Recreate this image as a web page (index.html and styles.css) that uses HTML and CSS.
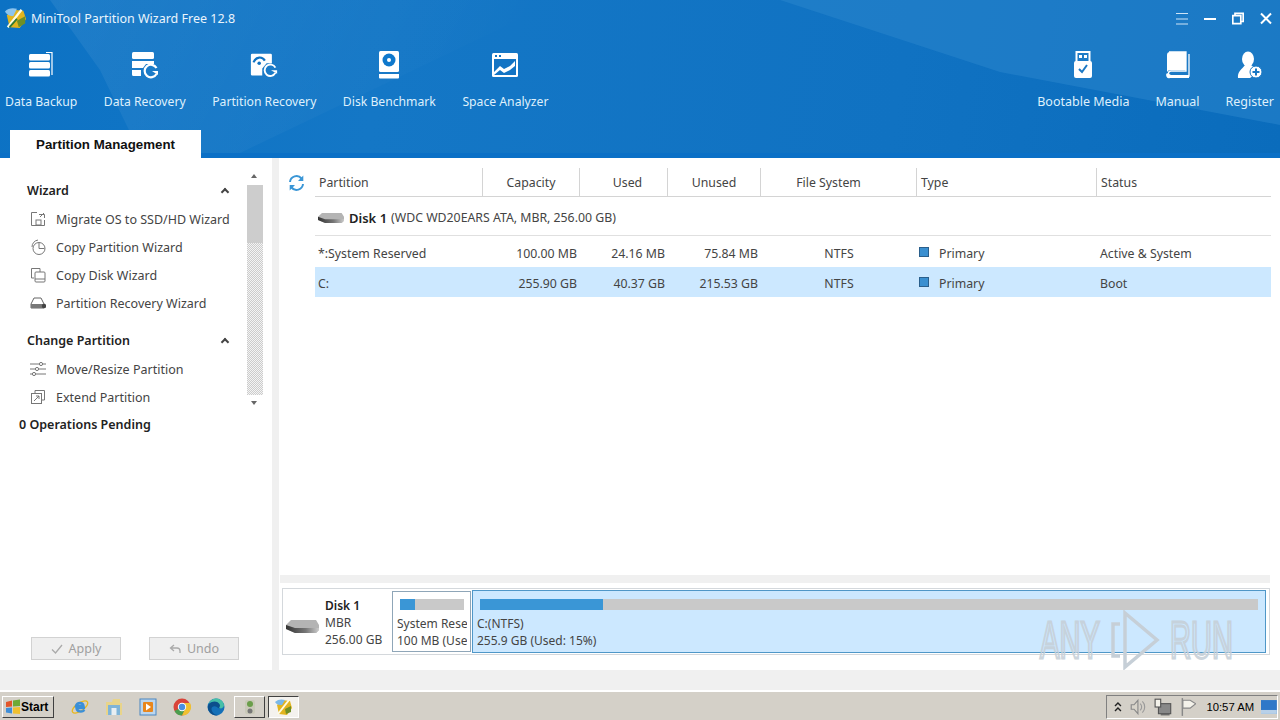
FILE: index.html
```html
<!DOCTYPE html>
<html lang="en">
<head>
  <meta charset="UTF-8">
  <title>MiniTool Partition Wizard Free 12.8</title>
  <link rel="stylesheet" href="styles.css">
</head>
<body>
<div class="app">

  <header class="top">
    <div class="titlebar">
      <svg class="logo" viewBox="0 0 24 24">
        <path d="M2 9 L9 3 L20 4 L23 13 L16 23 L5 22 Z" fill="#e2b41e"/>
        <path d="M0 5 C3 1 9 1 13 2 L9 10 C6 10 2 9 0 5Z" fill="#8cc4ee"/>
        <path d="M3 22 L18 3" stroke="#fffbe0" stroke-width="2.500"/>
        <path d="M13 15 L22 10 L22 18 L15 22 Z" fill="#6f8f26"/>
        <path d="M5 22 L13 13" stroke="#2f7a34" stroke-width="2"/>
      </svg>
      <span class="app-title">MiniTool Partition Wizard Free 12.8</span>
      <div class="win-btns">
        <svg viewBox="0 0 12 12"><path d="M0 1H12M0 6.500H12M0 11.500H12" stroke="#cfe4f6" stroke-width="1"/></svg>
        <svg viewBox="0 0 12 12"><path d="M0 6.500H12" stroke="#fff" stroke-width="2"/></svg>
        <svg viewBox="0 0 12 12"><path d="M3 3V0.800H11.200V9H9M0.800 3.200H8.800V11.200H0.800Z" fill="none" stroke="#fff" stroke-width="1.700"/></svg>
        <svg viewBox="0 0 12 12"><path d="M1 1L11 11M11 1L1 11" stroke="#fff" stroke-width="2"/></svg>
      </div>
    </div>

    <nav class="tools">
      <div class="tool-group tool-group-left">
        <div class="tool">
          <svg class="tool-icon" viewBox="0 0 28 28">
            <rect x="2" y="3" width="21" height="6.500" rx="1.500" fill="#fff"/>
            <rect x="2" y="11" width="21" height="6.500" rx="1.500" fill="#fff"/>
            <rect x="2" y="19" width="21" height="6.500" rx="1.500" fill="#fff"/>
            <path d="M19 1.500H25V24" fill="none" stroke="#fff" stroke-width="1.200"/>
          </svg>
          <span>Data Backup</span>
        </div>
        <div class="tool">
          <svg class="tool-icon" viewBox="0 0 28 28">
            <rect x="1" y="1" width="22" height="7" rx="1.500" fill="#fff"/>
            <path d="M1 10H23V13H15L12 17H1Z" fill="#fff"/>
            <path d="M1 19H10V25H2.500A1.500 1.500 0 0 1 1 23.500Z" fill="#fff"/>
            <path d="M25.500 17A6.300 6.300 0 1 0 25.500 23" fill="none" stroke="#fff" stroke-width="2.200"/>
            <path d="M21 20H27V24Z" fill="#fff"/>
          </svg>
          <span>Data Recovery</span>
        </div>
        <div class="tool">
          <svg class="tool-icon" viewBox="0 0 32 28">
            <path d="M2.500 1H23.500A1.500 1.500 0 0 1 25 2.500V12H19L14 18V26H2.500A1.500 1.500 0 0 1 1 24.500V2.500A1.500 1.500 0 0 1 2.500 1Z" fill="#fff"/>
            <path d="M4 11C7 4 14 4 17 9" fill="none" stroke="#0f72c2" stroke-width="2.500"/>
            <circle cx="10.500" cy="12" r="2" fill="#0f72c2"/>
            <path d="M29 17A6.500 6.500 0 1 0 29 23" fill="none" stroke="#fff" stroke-width="2.200"/>
            <path d="M24 20H31V24Z" fill="#fff"/>
          </svg>
          <span>Partition Recovery</span>
        </div>
        <div class="tool">
          <svg class="tool-icon" viewBox="0 0 28 28">
            <rect x="4" y="0" width="20" height="21" rx="1.500" fill="#fff"/>
            <circle cx="14" cy="9" r="6.500" fill="#0f78cc"/>
            <circle cx="14" cy="9" r="2" fill="#fff"/>
            <path d="M4 23H24V26.500A1 1 0 0 1 23 27.500H5A1 1 0 0 1 4 26.500Z" fill="#fff"/>
          </svg>
          <span>Disk Benchmark</span>
        </div>
        <div class="tool">
          <svg class="tool-icon" viewBox="0 0 28 28">
            <rect x="1" y="2" width="26" height="24" rx="1.500" fill="#fff"/>
            <rect x="3" y="8" width="22" height="16" fill="#1374c4"/>
            <rect x="4" y="4" width="2" height="2" fill="#1374c4"/>
            <rect x="8" y="4" width="2" height="2" fill="#1374c4"/>
            <path d="M3 21L9 15L13 18L19 15L24 10V15L19 19L13 22L9 19L3 24Z" fill="#fff"/>
          </svg>
          <span>Space Analyzer</span>
        </div>
      </div>
      <div class="tool-group tool-group-right">
        <div class="tool">
          <svg class="tool-icon" viewBox="0 0 28 28">
            <rect x="7.500" y="1" width="13" height="11" fill="none" stroke="#fff" stroke-width="2"/>
            <rect x="10" y="4" width="3" height="3" fill="#fff"/>
            <rect x="15" y="4" width="3" height="3" fill="#fff"/>
            <rect x="5" y="10" width="18" height="17" rx="2" fill="#fff"/>
            <path d="M10 18L13 21L18 14" fill="none" stroke="#1a78c4" stroke-width="2"/>
          </svg>
          <span>Bootable Media</span>
        </div>
        <div class="tool">
          <svg class="tool-icon" viewBox="0 0 28 28">
            <path d="M5 1H22V20H7A2.500 2.500 0 0 0 7 25H25V3" fill="none" stroke="#fff" stroke-width="1.300"/>
            <path d="M6 1H22V19H6.500A4 4 0 0 0 3 21V4A3 3 0 0 1 6 1Z" fill="#fff"/>
            <path d="M3 22A3 3 0 0 0 6 27H25V24H7" fill="#fff"/>
          </svg>
          <span>Manual</span>
        </div>
        <div class="tool">
          <svg class="tool-icon" viewBox="0 0 28 28">
            <ellipse cx="12" cy="8" rx="6" ry="7.500" fill="#fff"/>
            <path d="M9 14H15L23 20L14 27H2C1 21 6 18 9 14Z" fill="#fff"/>
            <circle cx="20" cy="21" r="6" fill="#fff" stroke="#1a78c4" stroke-width="1"/>
            <path d="M20 17.500V24.500M16.500 21H23.500" stroke="#1a78c4" stroke-width="2"/>
          </svg>
          <span>Register</span>
        </div>
      </div>
    </nav>

    <div class="tabs">
      <div class="tab">Partition Management</div>
    </div>
  </header>

  <main class="body">
    <aside class="side">
      <div class="side-scroll">
        <div class="side-list">
          <div class="group-head"><span>Wizard</span><span class="caret"></span></div>
          <div class="side-item">
            <svg viewBox="0 0 16 16"><path d="M7 1.500H1.500V14.500H14.500V9M9 3.500H14.500V7M14 2L10 6" fill="none" stroke="#777"/><rect x="6" y="9" width="5" height="5" fill="none" stroke="#777"/></svg>
            <span>Migrate OS to SSD/HD Wizard</span>
          </div>
          <div class="side-item">
            <svg viewBox="0 0 16 16"><circle cx="9" cy="9.500" r="6" fill="none" stroke="#777"/><path d="M9 4V9.500H14.500M2 8A7 7 0 0 1 8 1" fill="none" stroke="#777"/></svg>
            <span>Copy Partition Wizard</span>
          </div>
          <div class="side-item">
            <svg viewBox="0 0 16 16"><path d="M4 11H1.500V1.500H10V5" fill="none" stroke="#777"/><rect x="5" y="5" width="10" height="10" rx="1" fill="none" stroke="#777"/><path d="M5 12H15" stroke="#777"/></svg>
            <span>Copy Disk Wizard</span>
          </div>
          <div class="side-item">
            <svg viewBox="0 0 16 16"><path d="M1 9L4 3H11L14 9V13H1Z" fill="none" stroke="#666"/><rect x="1" y="9" width="13" height="4" fill="#777"/><circle cx="14" cy="11" r="2.200" fill="#444"/></svg>
            <span>Partition Recovery Wizard</span>
          </div>
          <div class="group-head group-head-next"><span>Change Partition</span><span class="caret"></span></div>
          <div class="side-item">
            <svg viewBox="0 0 16 16"><path d="M0 3H16M0 8H16M0 13H16" stroke="#777"/><circle cx="11" cy="3" r="1.600" fill="#fff" stroke="#777"/><circle cx="7" cy="8" r="1.600" fill="#fff" stroke="#777"/><circle cx="4" cy="13" r="1.600" fill="#fff" stroke="#777"/></svg>
            <span>Move/Resize Partition</span>
          </div>
          <div class="side-item">
            <svg viewBox="0 0 16 16"><path d="M5 4V1.500H14.500V11H12" fill="none" stroke="#777"/><rect x="1.500" y="4.500" width="10" height="10" fill="none" stroke="#777"/><path d="M4 12L9 7M6 7H9V10" fill="none" stroke="#777"/></svg>
            <span>Extend Partition</span>
          </div>
        </div>
        <div class="scrollbar">
          <div class="arrow arrow-up"></div>
          <div class="track"><div class="thumb"></div></div>
          <div class="arrow arrow-down"></div>
        </div>
      </div>
      <div class="pending">0 Operations Pending</div>
      <div class="side-actions">
        <button class="action"><svg viewBox="0 0 12 12"><path d="M1 6.500L4.500 10L11 2" fill="none" stroke="#aaa" stroke-width="1.300"/></svg>Apply</button>
        <button class="action"><svg viewBox="0 0 12 12"><path d="M5 2L1.500 5L5 8M1.500 5H8A3 3 0 0 1 11 8V10" fill="none" stroke="#aaa" stroke-width="1.300"/></svg>Undo</button>
      </div>
    </aside>

    <section class="content">
      <div class="table-wrap">
        <svg class="refresh" viewBox="0 0 16 16">
          <path d="M1.500 7A6.500 6.500 0 0 1 13 3.500M14.500 9A6.500 6.500 0 0 1 3 12.500" fill="none" stroke="#3a96d6" stroke-width="2"/>
          <path d="M14.800 0.500V6H9.500Z M1.200 15.500V10H6.500Z" fill="#3a96d6"/>
        </svg>
        <div class="table">
          <div class="row head">
            <div class="cell">Partition</div>
            <div class="cell center">Capacity</div>
            <div class="cell center used-head">Used</div>
            <div class="cell center">Unused</div>
            <div class="cell center fs-head">File System</div>
            <div class="cell">Type</div>
            <div class="cell">Status</div>
          </div>
          <div class="disk-row">
            <svg class="hdd-small" viewBox="0 0 33 15">
              <defs><linearGradient id="hddFace"><stop offset="0" stop-color="#333"/><stop offset="0.6" stop-color="#777"/><stop offset="1" stop-color="#ccc"/></linearGradient></defs>
              <path d="M5 1H30L33 6V11L30 14H9L0 10V6Z" fill="#b4b4b4"/>
              <path d="M0 6L9 9H33V11L30 14H9L0 10Z" fill="url(#hddFace)"/>
            </svg>
            <strong>Disk 1</strong><span>(WDC WD20EARS ATA, MBR, 256.00 GB)</span>
          </div>
          <div class="rows">
            <div class="row">
              <div class="cell cell-name">*:System Reserved</div>
              <div class="cell right">100.00 MB</div>
              <div class="cell right">24.16 MB</div>
              <div class="cell right">75.84 MB</div>
              <div class="cell center fs-cell">NTFS</div>
              <div class="cell type-cell"><i class="swatch"></i>Primary</div>
              <div class="cell cell-status">Active &amp; System</div>
            </div>
            <div class="row selected">
              <div class="cell cell-name">C:</div>
              <div class="cell right">255.90 GB</div>
              <div class="cell right">40.37 GB</div>
              <div class="cell right">215.53 GB</div>
              <div class="cell center fs-cell">NTFS</div>
              <div class="cell type-cell"><i class="swatch"></i>Primary</div>
              <div class="cell cell-status">Boot</div>
            </div>
          </div>
        </div>
      </div>

      <div class="hbar"></div>

      <div class="diskmap">
        <div class="disk-info">
          <svg class="hdd" viewBox="0 0 33 15">
            <path d="M5 1H30L33 6V11L30 14H9L0 10V6Z" fill="#b4b4b4"/>
            <path d="M0 6L9 9H33V11L30 14H9L0 10Z" fill="url(#hddFace)"/>
          </svg>
          <div class="disk-text">
            <strong>Disk 1</strong>
            <span>MBR</span>
            <span>256.00 GB</span>
          </div>
        </div>
        <div class="part part-sys">
          <div class="bar"><div class="bar-used" style="width:24%"></div></div>
          <div class="part-text">System Rese</div>
          <div class="part-text">100 MB (Use</div>
        </div>
        <div class="part part-c">
          <div class="bar"><div class="bar-used" style="width:15.800%"></div></div>
          <div class="part-text">C:(NTFS)</div>
          <div class="part-text">255.9 GB (Used: 15%)</div>
        </div>
      </div>
    </section>
  </main>

  <div class="band"></div>

  <footer class="taskbar">
    <button class="start">
      <svg viewBox="0 0 16 16">
        <path d="M1 3L7 1.500V7.500L1 8Z" fill="#e2562a"/>
        <path d="M8 1.500L15 0.500V7L8 7.500Z" fill="#6eaa36"/>
        <path d="M1 9L7 8.500V14.500L1 13.500Z" fill="#3f8ed8"/>
        <path d="M8 8.500L15 8V15L8 14.500Z" fill="#f0c030"/>
      </svg>Start
    </button>
    <div class="quick">
      <svg viewBox="0 0 18 18"><ellipse cx="9" cy="9" rx="9" ry="4" fill="none" stroke="#e8b820" stroke-width="1.300" transform="rotate(-35 9 9)"/><path d="M14 10H5.500C6 14 11 14.500 13.500 12M5 8H12.500C12 4 6 4 5 8Z" fill="none" stroke="#3a8fd8" stroke-width="2.400"/></svg>
      <svg viewBox="0 0 18 18"><path d="M1 4H7L8 1H15V5H17V17H1Z" fill="#e8d48a"/><path d="M3 7H15V17H3Z" fill="#7fb4d8"/><rect x="6.500" y="10" width="5" height="7" fill="#e9eef2"/></svg>
      <svg viewBox="0 0 18 18"><rect x="1" y="1" width="16" height="16" fill="#bcd6ee" stroke="#4a86c0"/><rect x="4" y="4" width="10" height="10" rx="1" fill="#e8871e"/><path d="M7 5.500L12 9L7 12.500Z" fill="#fff"/></svg>
      <svg viewBox="0 0 18 18"><circle cx="9" cy="9" r="8.500" fill="#d9443a"/><path d="M9 9L1.500 13A8.500 8.500 0 0 0 9 17.500L13 10Z" fill="#4a9e4e"/><path d="M9 5H17A8.500 8.500 0 0 1 9 17.500L12.500 10Z" fill="#f0c030"/><circle cx="9" cy="9" r="4.200" fill="#fff"/><circle cx="9" cy="9" r="3.200" fill="#4a8fe0"/></svg>
      <svg viewBox="0 0 18 18"><circle cx="9" cy="9" r="8.500" fill="#1470b8"/><path d="M1 8C3 2 13 1 17 7C17 11 11 11 10 9C7 7 3 9 5 13C6 16 9 17.500 12 17C6 19 0 14 1 8Z" fill="#0c4f8c"/><path d="M17 7C16 2 12 0.500 9 0.500C5 0.500 2 4 1.500 6C4 3 11 2 13 7C13 9 12 10 12 10C14 11 17 10 17 7Z" fill="#46c0a8"/></svg>
    </div>
    <div class="task-btn">
      <svg viewBox="0 0 18 18"><rect x="4" y="2" width="10" height="14" rx="2" fill="#c9c9b8"/><circle cx="9" cy="6" r="3" fill="#6a9e4a"/><circle cx="9" cy="13" r="2.500" fill="#777"/></svg>
    </div>
    <div class="task-btn task-active">
      <svg viewBox="0 0 18 18"><path d="M2 7L7 2L15 3L17 10L12 17L4 16Z" fill="#e2b41e"/><path d="M0 4C3 1 7 1 10 2L7 7C4 7 2 7 0 4Z" fill="#7ab8e8"/><path d="M3 16L14 2" stroke="#fffbe0" stroke-width="2"/><path d="M10 11L16 8L16 14L11 16Z" fill="#6f8f26"/></svg>
    </div>
    <div class="tray">
      <svg class="tray-up" viewBox="0 0 8 10"><path d="M1 4L4 1L7 4M1 9L4 6L7 9" fill="none" stroke="#222" stroke-width="1.400"/></svg>
      <svg viewBox="0 0 16 16"><path d="M2 6H4.500L8 2V14L4.500 10H2Z" fill="#d8d4ca" stroke="#888"/><path d="M10 5A4 4 0 0 1 10 11M12 3A7 7 0 0 1 12 13" fill="none" stroke="#999"/></svg>
      <svg viewBox="0 0 16 16"><rect x="4" y="5" width="11" height="9" fill="#888" stroke="#555"/><rect x="1" y="1" width="5" height="7" fill="#f4f2ea" stroke="#555"/><path d="M6 15H14" stroke="#555"/></svg>
      <svg viewBox="0 0 16 16"><path d="M3 0V16" stroke="#888" stroke-width="1.300"/><path d="M3.500 2H10L15 5L10 9H3.500Z" fill="#f4f2ea" stroke="#888"/></svg>
      <span class="clock">10:57 AM</span>
      <svg class="tray-desk" viewBox="0 0 16 16"><rect x="0" y="1" width="16" height="14" fill="#2f78c8"/><rect x="0" y="11" width="16" height="4" fill="#b8d0e8"/></svg>
    </div>
  </footer>

  <div class="watermark">
    <span>ANY</span>
    <svg viewBox="0 0 50 60"><path d="M10 14H3V46H10M15 3L47 30L15 57Z" fill="none" stroke="#c6cfd7" stroke-width="3.500"/></svg>
    <span>RUN</span>
  </div>
</div>
</body>
</html>
```
FILE: styles.css
```css
* {
  box-sizing: border-box;
}

html,
body {
  margin: 0;
  height: 100%;
}

body {
  font-family: "Noto Sans", "Open Sans", sans-serif;
  font-size: 12px;
  color: #333;
  background: #f0f0f0;
  overflow: hidden;
}

.app {
  position: relative;
  display: flex;
  flex-direction: column;
  width: 1280px;
  height: 720px;
}

/* header */
.top {
  position: relative;
  flex: 0 0 158px;
  display: flex;
  flex-direction: column;
  background: linear-gradient(100deg, #0c72c4 0, #1477c6 30%, #1072c2 70%, #0a6cbc 100%);
  border-bottom: 5px solid #0b70c6;
  color: #fff;
}

.top::before {
  content: "";
  position: absolute;
  inset: 0;
  background: linear-gradient(118deg, transparent 0, rgba(255, 255, 255, 0.07) 4%, rgba(255, 255, 255, 0.02) 30%, transparent 40%);
  clip-path: polygon(50px 0, 560px 0, 240px 153px, 140px 153px, 100px 70px);
}

.top::after {
  content: "";
  position: absolute;
  inset: 0;
  background: #2a85cc;
  opacity: 0.55;
  clip-path: polygon(780px 0, 1280px 0, 1280px 125px, 1000px 72px);
}

.titlebar,
.tools,
.tabs {
  position: relative;
  z-index: 1;
}

.titlebar {
  display: flex;
  align-items: center;
  flex: 0 0 36px;
  padding-left: 5px;
}

.logo {
  width: 22px;
  height: 24px;
}

.app-title {
  margin-left: 4px;
  font-size: 12.5px;
  color: #eaf4fc;
}

.win-btns {
  display: flex;
  gap: 16px;
  margin-left: auto;
  margin-right: 8px;
}

.win-btns svg {
  width: 12px;
  height: 13px;
  display: block;
}

.tools {
  display: flex;
  justify-content: space-between;
  flex: 0 0 94px;
  padding: 15px 6px 0 5px;
}

.tool-group {
  display: flex;
}

.tool-group-left {
  gap: 26.5px;
  font-size: 12.2px;
}

.tool-group-right {
  gap: 26px;
  font-size: 12.5px;
}

.tool {
  display: flex;
  flex-direction: column;
  align-items: center;
  color: #dff0fc;
}

.tool-icon {
  width: 28px;
  height: 28px;
  margin-bottom: 14px;
}

.tabs {
  flex: 0 0 23px;
  min-height: 0;
  padding-left: 10px;
}

.tab {
  width: 191px;
  height: 28px;
  background: #fff;
  color: #111;
  font-family: "Liberation Sans", Arial, sans-serif;
  font-weight: bold;
  font-size: 13.3px;
  text-align: center;
  line-height: 30px;
}

/* main area */
.body {
  flex: 0 0 512px;
  display: flex;
  background: #fff;
}

.side {
  flex: 0 0 279px;
  display: flex;
  flex-direction: column;
  border-right: 7px solid #f0f0f0;
}

.side-scroll {
  display: flex;
  height: 254px;
}

.side-list {
  flex: 0 0 247px;
  padding: 18px 0 0 27px;
}

.group-head {
  display: flex;
  align-items: center;
  justify-content: space-between;
  height: 29px;
  padding-right: 19px;
  font-weight: 600;
  font-size: 12.5px;
  color: #222;
}

.group-head-next {
  margin-top: 9px;
}

.caret {
  width: 6px;
  height: 6px;
  margin-top: 3px;
  border-left: 2px solid #444;
  border-top: 2px solid #444;
  transform: rotate(45deg);
}

.side-item {
  display: flex;
  align-items: center;
  gap: 10px;
  height: 28px;
  padding-left: 3px;
  font-size: 12.5px;
  color: #444;
  white-space: nowrap;
}

.side-item svg {
  flex: none;
  width: 16px;
  height: 16px;
}

.scrollbar {
  flex: 0 0 16px;
  display: flex;
  flex-direction: column;
  padding-top: 10px;
}

.arrow {
  flex: 0 0 17px;
  position: relative;
}

.arrow::after {
  content: "";
  position: absolute;
  left: 4px;
  top: 6px;
  border-left: 3.5px solid transparent;
  border-right: 3.5px solid transparent;
}

.arrow-up::after {
  border-bottom: 4px solid #666;
}

.arrow-down::after {
  border-top: 4px solid #666;
}

.track {
  flex: 1;
  background-color: #e8e8e8;
  background-image: repeating-conic-gradient(#ccc 0 25%, #f4f4f4 0 50%);
  background-size: 2px 2px;
}

.thumb {
  height: 58px;
  background: #cdcdcd;
}

.pending {
  height: 26px;
  padding-left: 19px;
  font-weight: 600;
  font-size: 12.5px;
  line-height: 26px;
  color: #222;
}

.side-actions {
  display: flex;
  gap: 28px;
  margin-top: auto;
  padding: 0 0 10px 31px;
}

.action {
  display: flex;
  align-items: center;
  justify-content: center;
  gap: 6px;
  width: 90px;
  height: 23px;
  padding: 0;
  border: 1px solid #d2d2d2;
  background: #efefef;
  font-family: inherit;
  font-size: 12.5px;
  color: #a0a0a0;
}

.action svg {
  width: 12px;
  height: 12px;
}

.content {
  flex: 1;
  display: flex;
  flex-direction: column;
  min-width: 0;
}

.table-wrap {
  position: relative;
  flex: 1;
  padding: 10px 9px 0 36px;
}

.refresh {
  position: absolute;
  left: 9px;
  top: 17px;
  width: 17px;
  height: 16px;
}

.row {
  display: grid;
  grid-template-columns: 168px 97px 88px 93px 156px 180px 174px;
  align-items: center;
  height: 30px;
  padding-top: 2px;
  font-size: 12.3px;
  color: #444;
}

.head {
  height: 29px;
  padding-top: 0;
  border-bottom: 1px solid #d4d4d4;
}

.head .cell {
  height: 28px;
  line-height: 29px;
  padding-left: 4px;
  border-right: 1px solid #d4d4d4;
}

.head .cell:last-child {
  border-right: 0;
}

.head .center {
  padding-left: 0;
  text-align: center;
}

.head .used-head {
  padding-left: 8px;
}

.head .fs-head {
  padding-right: 20px;
}

.disk-row {
  display: flex;
  align-items: center;
  height: 39px;
  margin-bottom: 1px;
  padding: 3px 0 0 3px;
  border-bottom: 1px solid #e0e0e0;
  font-size: 12.3px;
  color: #444;
}

.disk-row strong {
  margin-right: 4px;
  font-weight: 600;
  font-size: 13px;
  color: #222;
}

.hdd-small {
  width: 26px;
  height: 12px;
  margin-right: 5px;
}

.selected {
  background: #cce8ff;
}

.cell {
  white-space: nowrap;
}

.cell-name {
  padding-left: 3px;
}

.right {
  padding-right: 3px;
  text-align: right;
}

.center {
  text-align: center;
}

.type-cell {
  display: flex;
  align-items: center;
  padding-left: 2px;
}

.cell-status {
  padding-left: 3px;
}

.swatch {
  width: 10px;
  height: 10px;
  margin-right: 10px;
  margin-top: -2px;
  background: #3a8fd0;
  border: 1px solid #2a5f8c;
}

.hbar {
  flex: 0 0 8px;
  margin: 0 10px 0 1px;
  background: #f0f0f0;
}

.diskmap {
  flex: 0 0 67px;
  display: flex;
  align-items: stretch;
  gap: 1px;
  margin: 5px 10px 15px 3px;
  padding: 1px 3px 1px 0;
  border: 1px solid #d4d8dc;
  font-size: 12px;
  color: #444;
}

.disk-info {
  flex: 0 0 108px;
  display: flex;
  align-items: center;
  padding-left: 3px;
}

.hdd {
  width: 33px;
  height: 15px;
  margin: 10px 6px 0 0;
}

.disk-text {
  display: flex;
  flex-direction: column;
  padding-top: 2px;
  line-height: 17px;
  white-space: nowrap;
}

.disk-text strong {
  font-weight: 600;
  color: #222;
}

.part {
  padding: 7px 3px 0 4px;
  border: 1px solid #8fa6b8;
  overflow: hidden;
  white-space: nowrap;
}

.part-sys {
  flex: 0 0 79px;
  margin: 1px 0;
}

.part-c {
  flex: 1;
  border-color: #4f97c8;
  background: #cce8ff;
  padding-top: 8px;
}

.bar {
  height: 11px;
  margin: 0 3px 5px 3px;
  background: #c9c9c9;
}

.part-c .bar {
  margin-right: 4px;
}

.bar-used {
  height: 100%;
  background: #3a96d6;
}

.part-text {
  overflow: hidden;
  line-height: 17px;
}

.band {
  flex: 0 0 20px;
  background: #f0f0f0;
}

/* windows taskbar */
.taskbar {
  flex: 1;
  display: flex;
  align-items: center;
  padding: 2px 2px 0;
  background: #d4d0c8;
  border-top: 2px solid #fff;
  font-family: "Liberation Sans", Arial, sans-serif;
}

.start {
  display: flex;
  align-items: center;
  gap: 0;
  width: 52px;
  height: 22px;
  padding: 0 0 0 2px;
  background: #d4d0c8;
  border: 1px solid;
  border-color: #fff #404040 #404040 #fff;
  font-family: inherit;
  font-weight: bold;
  font-size: 12px;
  color: #000;
}

.start svg {
  width: 16px;
  height: 16px;
}

.quick {
  display: flex;
  gap: 16px;
  margin-left: 17px;
}

.quick svg {
  display: block;
  width: 18px;
  height: 18px;
}

.task-btn {
  display: flex;
  align-items: center;
  justify-content: center;
  width: 31px;
  height: 22px;
  margin-left: 9px;
  border: 1px solid;
  border-color: #fff #404040 #404040 #fff;
}

.task-btn svg {
  width: 18px;
  height: 18px;
}

.task-active {
  margin-left: 3px;
  background: #f4f2ee;
  border-color: #404040 #fff #fff #404040;
}

.tray {
  display: flex;
  align-items: center;
  gap: 7px;
  width: 172px;
  height: 24px;
  margin-left: auto;
  padding-left: 7px;
  border: 1px solid;
  border-color: #808080 #fff #fff #808080;
}

.tray svg {
  width: 18px;
  height: 18px;
}

.tray .tray-up {
  width: 8px;
  height: 10px;
}

.clock {
  margin-left: 3px;
  font-size: 11.3px;
  color: #000;
  white-space: nowrap;
}

.tray .tray-desk {
  width: 16px;
  height: 16px;
}

.watermark {
  position: absolute;
  left: 1040px;
  top: 610px;
  display: flex;
  align-items: center;
  gap: 10px;
  height: 60px;
  font-family: "Liberation Sans", Arial, sans-serif;
  font-size: 52px;
  color: transparent;
  -webkit-text-stroke: 3px rgba(198, 207, 215, 0.9);
  pointer-events: none;
}

.watermark span {
  display: inline-block;
  width: 60px;
  transform: scaleX(0.56);
  transform-origin: left center;
  white-space: nowrap;
}

.watermark svg {
  width: 50px;
  height: 60px;
}
```
